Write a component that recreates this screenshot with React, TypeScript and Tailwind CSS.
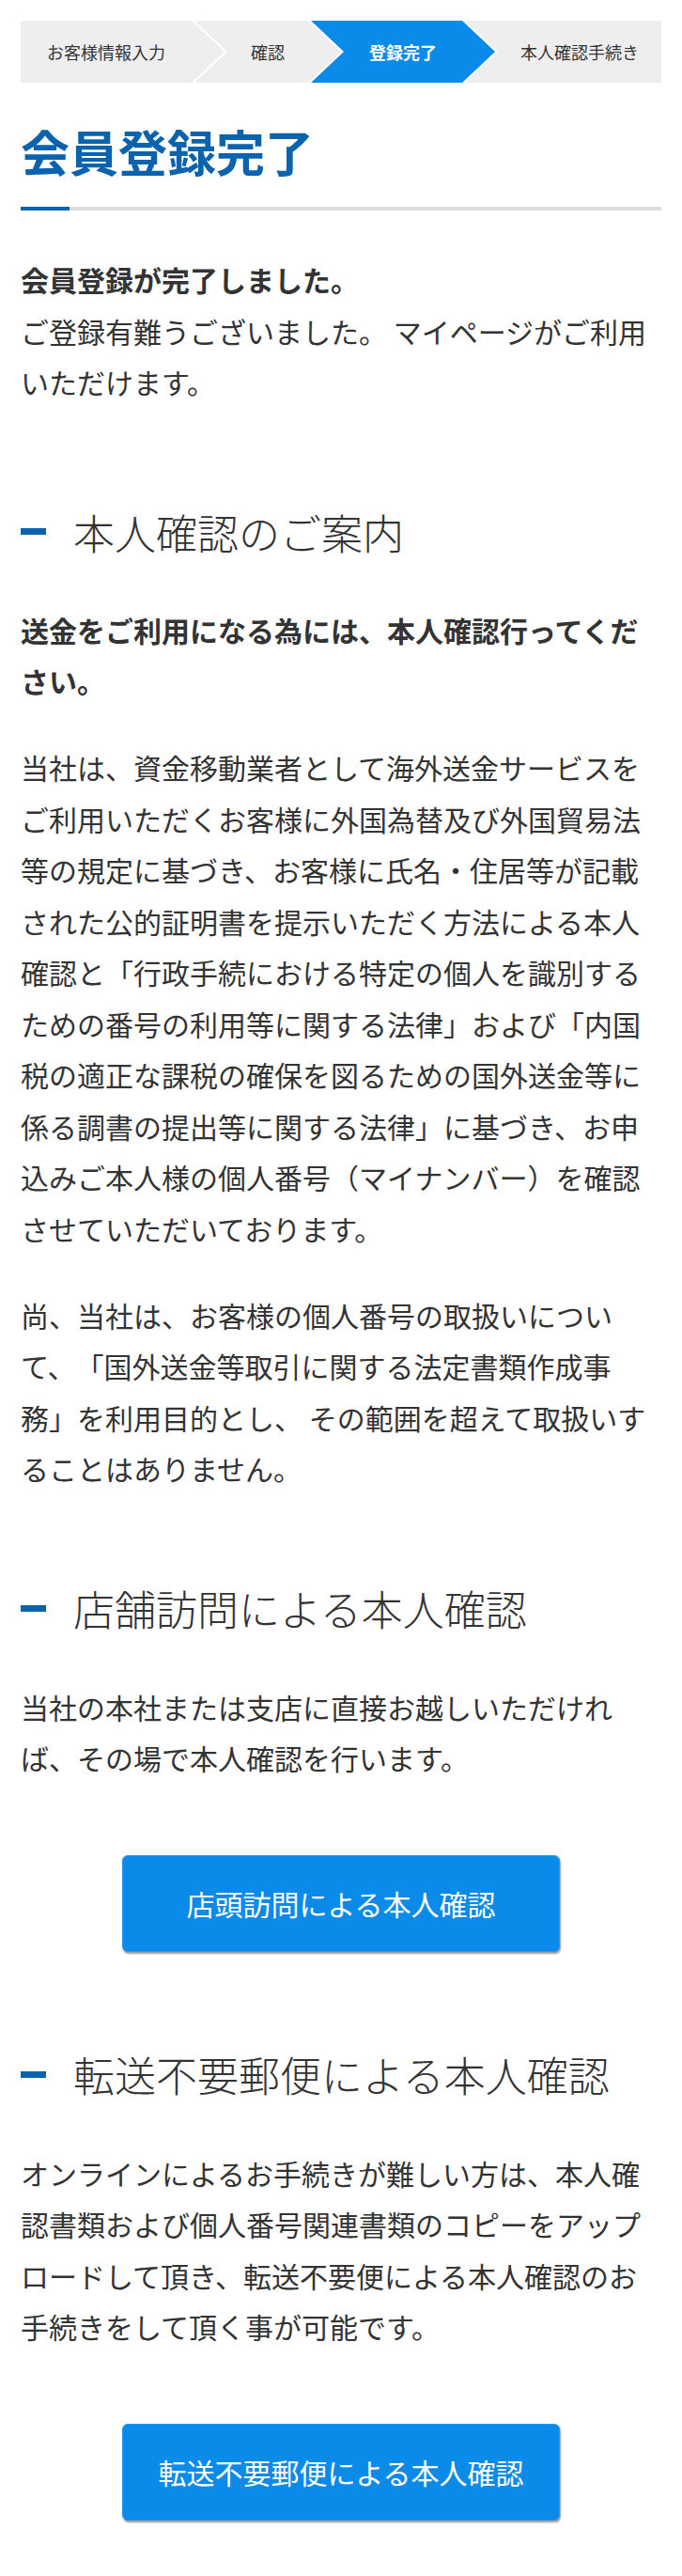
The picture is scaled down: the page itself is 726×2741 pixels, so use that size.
const steps = [
  { label: "お客様情報入力", cls: "w-[217px] pr-[35px] [clip-path:polygon(0_0,calc(100%_-_35px)_0,100%_50%,calc(100%_-_35px)_100%,0_100%)]" },
  { label: "確認", cls: "w-[156px] -ml-[32px] pl-[35px] pr-[35px] [clip-path:polygon(0_0,calc(100%_-_35px)_0,100%_50%,calc(100%_-_35px)_100%,0_100%,35px_50%)]" },
  { label: "登録完了", active: true, cls: "w-[196px] -ml-[32px] pl-[35px] pr-[35px] [clip-path:polygon(0_0,calc(100%_-_35px)_0,100%_50%,calc(100%_-_35px)_100%,0_100%,35px_50%)]" },
  { label: "本人確認手続き", cls: "flex-1 -ml-[32px] pl-[35px] [clip-path:polygon(0_0,100%_0,100%_100%,0_100%,35px_50%)]" },
];

function Steps() {
  return (
    <div className="flex h-[66px]">
      {steps.map((s) => (
        <div
          key={s.label}
          className={`flex items-center justify-center whitespace-nowrap text-[18px] ${s.cls} ${
            s.active ? "bg-[#0a8ae9] font-bold text-white" : "bg-[#eeeeee] text-[#333]"
          }`}
        >
          {s.label}
        </div>
      ))}
    </div>
  );
}

function SectionTitle({ children, className = "" }: { children: React.ReactNode; className?: string }) {
  return (
    <h2 className={`flex items-center gap-[29px] text-[44px] font-light leading-[60px] text-[#333] ${className}`}>
      <span className="h-[7px] w-[27px] shrink-0 bg-[#0b62ad]" />
      {children}
    </h2>
  );
}

function BlueButton({ children, className = "" }: { children: React.ReactNode; className?: string }) {
  return (
    <button
      type="button"
      className={`mx-auto flex h-[103px] w-[466px] items-center justify-center rounded-[6px] border border-[#2f95ef] bg-[#0a8ae9] text-[30px] text-white shadow-[1px_2px_2px_rgba(0,0,0,0.4)] ${className}`}
    >
      {children}
    </button>
  );
}

export default function App() {
  return (
    <div className="min-h-screen bg-white px-[22px] pt-[22px] pb-[58px] font-['Noto_Sans_CJK_JP','Noto_Sans',sans-serif] text-[30px] leading-[54.5px] text-[#333] [text-spacing-trim:space-all]">
      <Steps />

      <h1 className="mt-[42px] text-[52px] font-bold leading-[62px] text-[#0b62ad]">会員登録完了</h1>
      <div className="mt-[28px] h-[4px] bg-[#dddddd]">
        <div className="h-full w-[52px] bg-[#0b62ad]" />
      </div>

      <p className="mt-[46px]">
        <strong className="font-bold">会員登録が完了しました。</strong>
        <br />
        ご登録有難うございました。 マイページがご利用いただけます。
      </p>

      <SectionTitle className="mt-[102px]">本人確認のご案内</SectionTitle>

      <p className="mt-[47px] font-bold">送金をご利用になる為には、本人確認行ってください。</p>

      <p className="mt-[37.5px]">
        当社は、資金移動業者として海外送金サービスをご利用いただくお客様に外国為替及び外国貿易法等の規定に基づき、お客様に氏名・住居等が記載された公的証明書を提示いただく方法による本人確認と「行政手続における特定の個人を識別するための番号の利用等に関する法律」および「内国税の適正な課税の確保を図るための国外送金等に係る調書の提出等に関する法律」に基づき、お申込みご本人様の個人番号（マイナンバー）を確認させていただいております。
      </p>

      <p className="mt-[37.5px]">
        尚、当社は、お客様の個人番号の取扱いについて、「国外送金等取引に関する法定書類作成事務」を利用目的とし、 その範囲を超えて取扱いすることはありません。
      </p>

      <SectionTitle className="mt-[91.5px]">店舗訪問による本人確認</SectionTitle>

      <p className="mt-[47.5px]">当社の本社または支店に直接お越しいただければ、その場で本人確認を行います。</p>

      <BlueButton className="mt-[76px]">店頭訪問による本人確認</BlueButton>

      <SectionTitle className="mt-[100.5px]">転送不要郵便による本人確認</SectionTitle>

      <p className="mt-[47.5px]">
        オンラインによるお手続きが難しい方は、本人確認書類および個人番号関連書類のコピーをアップロードして頂き、転送不要便による本人確認のお手続きをして頂く事が可能です。
      </p>

      <BlueButton className="mt-[76px]">転送不要郵便による本人確認</BlueButton>
    </div>
  );
}
